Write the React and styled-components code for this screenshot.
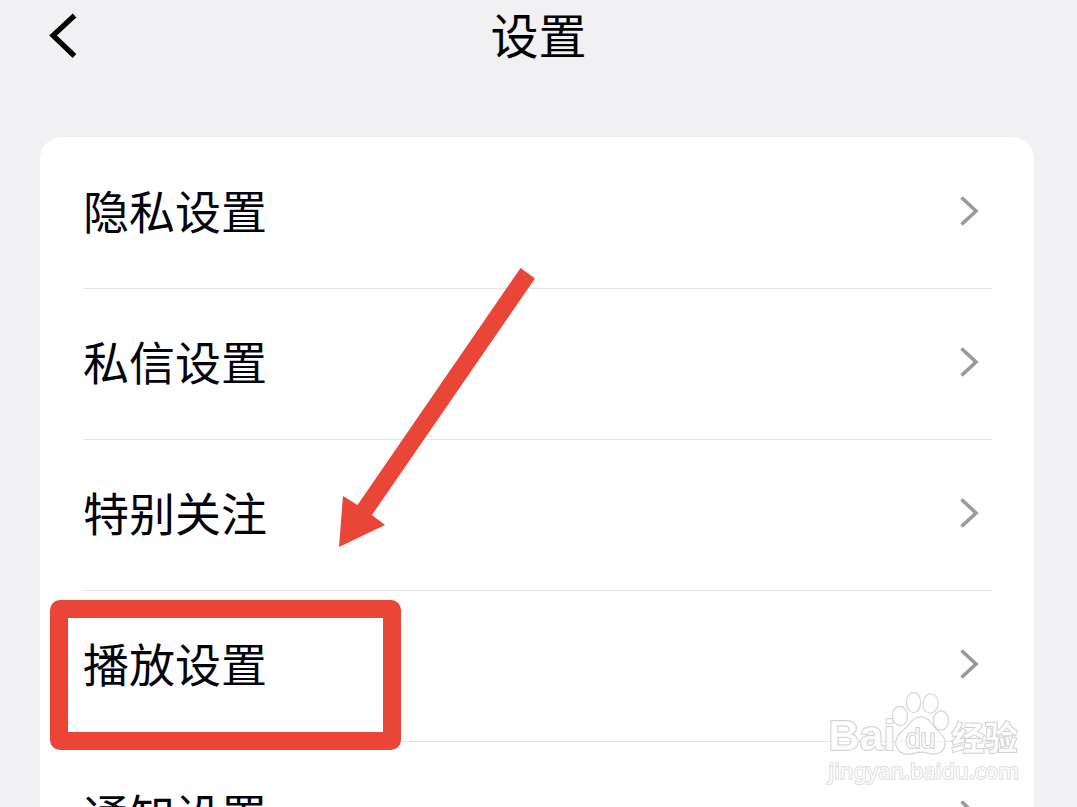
import React from "react";
import styled, { createGlobalStyle } from "styled-components";

const GlobalStyle = createGlobalStyle`
  * { box-sizing: border-box; }
  body {
    margin: 0;
    background: #f1f1f4;
    color: #04040f;
    font-family: "Noto Sans CJK SC", "Liberation Sans", sans-serif;
  }
`;

const Page = styled.div`
  position: relative;
  height: 100vh;
  overflow-y: auto;
  scrollbar-width: none;
`;

const Header = styled.header`
  display: grid;
  grid-template-columns: 1fr auto 1fr;
  align-items: center;
  height: 72px;
  padding: 0 40px;
`;

const BackButton = styled.button`
  justify-self: start;
  display: flex;
  padding: 8px;
  border: 0;
  background: none;
  cursor: pointer;
`;

const Title = styled.h1`
  margin: 0;
  padding-bottom: 6px;
  font-size: 48px;
  line-height: 66px;
  font-weight: 400;
  color: #000;
`;

const Card = styled.main`
  position: relative;
  margin: 65px 43px 40px 40px;
  padding: 1px 42px 0 43px;
  border-radius: 22px;
  background: #fff;
`;

const List = styled.ul`
  margin: 0;
  padding: 0;
  list-style: none;
`;

const Item = styled.li`
  position: relative;
  border-bottom: 1px solid #e3e3e5;
  &:last-child { border-bottom-color: transparent; }
`;

const RowButton = styled.button`
  display: flex;
  align-items: center;
  justify-content: space-between;
  width: 100%;
  height: 150px;
  padding: 0 12px 4px 0;
  border: 0;
  background: none;
  color: inherit;
  font-family: inherit;
  font-size: 46px;
  line-height: 68px;
  text-align: left;
  cursor: pointer;
`;

const Label = styled.span`
  padding-bottom: 4px;
`;

const Highlight = styled.span`
  position: absolute;
  top: 9px;
  left: -33px;
  width: 351px;
  height: 150px;
  border: 18px solid #e94638;
  border-radius: 10px;
  pointer-events: none;
  z-index: 1;
`;

const Arrow = styled.svg`
  position: absolute;
  top: 130px;
  left: 298px;
  pointer-events: none;
`;

const Watermark = styled.div`
  position: fixed;
  right: 58px;
  bottom: 22px;
  display: flex;
  flex-direction: column;
  align-items: flex-start;
  pointer-events: none;
  color: rgba(255, 255, 255, 0.85);
  z-index: 2;
  -webkit-text-stroke: 2px #d2d2d2;
  paint-order: stroke fill;
`;

const Brand = styled.div`
  display: flex;
  align-items: flex-end;
  height: 64px;
`;

const Latin = styled.span`
  width: 63px;
  font: 700 43px/40px "Liberation Sans", sans-serif;
`;

const Chinese = styled.span`
  padding-bottom: 3px;
  font: 700 33px/32px "Noto Sans CJK SC", sans-serif;
`;

const Paw = styled.span`
  position: relative;
  display: flex;
  width: 60px;
`;

const PawText = styled.span`
  position: absolute;
  left: 14px;
  bottom: 0;
  font: 400 27px/32px "Liberation Sans", sans-serif;
`;

const Site = styled.span`
  font: 400 22px/30px "Noto Sans", sans-serif;
  -webkit-text-stroke-color: #e0e0e0;
`;

const rows = [
  { label: "隐私设置" },
  { label: "私信设置" },
  { label: "特别关注" },
  { label: "播放设置", highlighted: true },
  { label: "通知设置" },
];

function Chevron() {
  return (
    <svg width="22" height="32" viewBox="0 0 22 32" fill="none" aria-hidden="true">
      <path d="M3.500 2.500 18 16 3.500 29.500" stroke="#9a9a9a" strokeWidth="3.6" />
    </svg>
  );
}

function SettingRow({ label, highlighted }) {
  return (
    <Item>
      <RowButton type="button">
        <Label>{label}</Label>
        <Chevron />
      </RowButton>
      {highlighted && <Highlight />}
    </Item>
  );
}

function BaiduMark() {
  return (
    <Watermark>
      <Brand>
        <Latin>Bai</Latin>
        <Paw>
          <svg width="60" height="64" viewBox="0 0 60 64" fill="#fff" fillOpacity="0.5" stroke="#cfcfcf" strokeWidth="1.4" aria-hidden="true">
            <ellipse cx="9" cy="25" rx="7.5" ry="9.5" transform="rotate(-6 9 25)" />
            <ellipse cx="22.500" cy="11.500" rx="7" ry="10" />
            <ellipse cx="39.500" cy="12.500" rx="7.500" ry="9.500" transform="rotate(8 39.500 12.500)" />
            <ellipse cx="50" cy="29.500" rx="7.500" ry="9.500" />
            <path d="M30 26C23 26 20 31 16 36C11 41 5 44 5 52C5 59 10 63 17 63C22 63 25 61 30 61C35 61 38 63 43 63C50 63 54 58 54 52C54 45 49 42 44 37C40 32 37 26 30 26Z" />
          </svg>
          <PawText>du</PawText>
        </Paw>
        <Chinese>经验</Chinese>
      </Brand>
      <Site>jingyan.baidu.com</Site>
    </Watermark>
  );
}

export default function App() {
  return (
    <>
      <GlobalStyle />
      <Page>
        <Header>
          <BackButton type="button" aria-label="返回">
            <svg width="32" height="52" viewBox="0 0 32 52" fill="none" aria-hidden="true">
              <path d="M26.500 5.500 5 25.500 26.500 46" stroke="#000" strokeWidth="5.2" />
            </svg>
          </BackButton>
          <Title>设置</Title>
        </Header>
        <Card>
          <List>
            {rows.map((row) => (
              <SettingRow key={row.label} {...row} />
            ))}
          </List>
          <Arrow width="198" height="282" viewBox="0 0 198 282" aria-hidden="true">
            <path d="M182.500 1 197 11.500 34 248 47 258 1 280 5 229 19.500 238Z" fill="#e94638" />
          </Arrow>
        </Card>
        <BaiduMark />
      </Page>
    </>
  );
}
